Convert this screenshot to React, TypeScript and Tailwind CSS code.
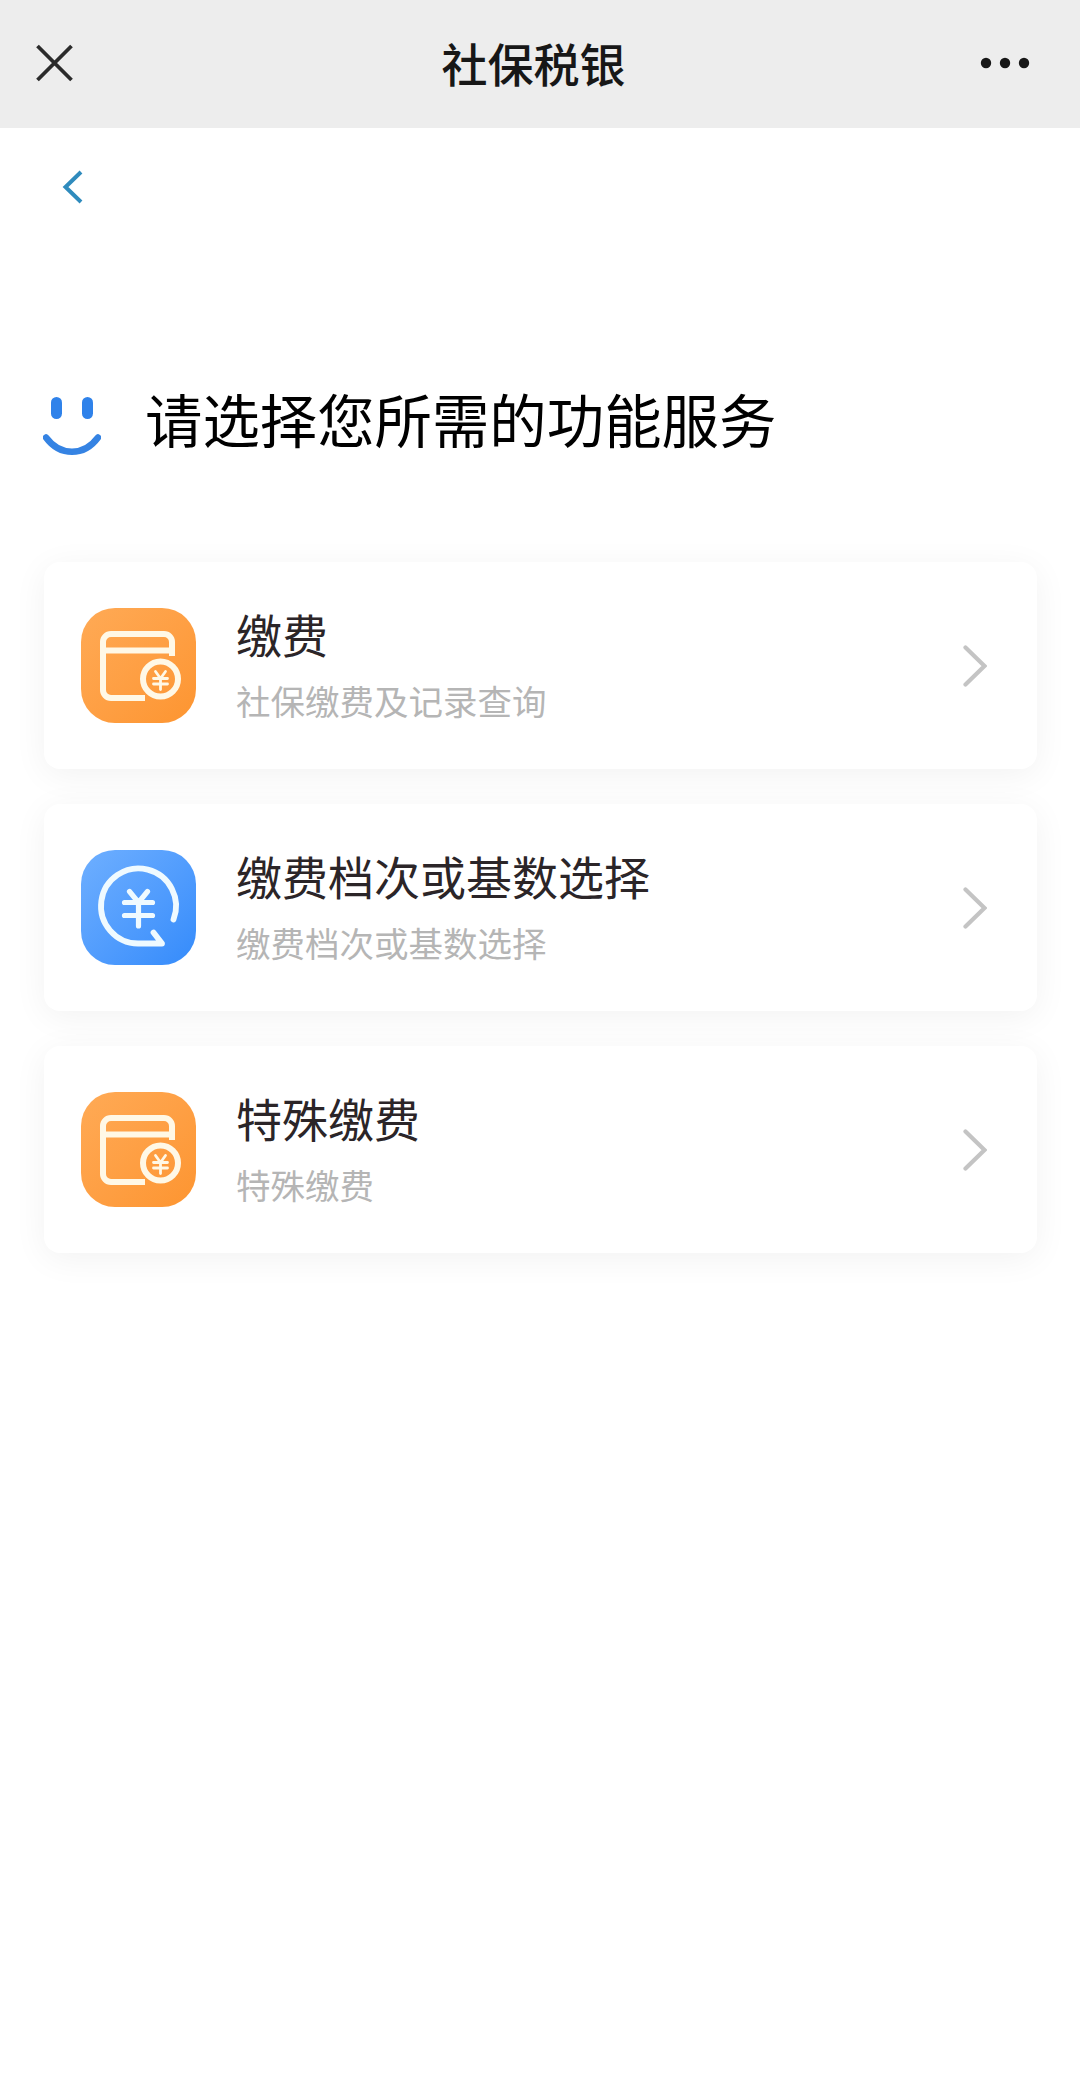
type ServiceKind = "card" | "coin";

interface Service {
  title: string;
  desc: string;
  kind: ServiceKind;
}

const services: Service[] = [
  { title: "缴费", desc: "社保缴费及记录查询", kind: "card" },
  { title: "缴费档次或基数选择", desc: "缴费档次或基数选择", kind: "coin" },
  { title: "特殊缴费", desc: "特殊缴费", kind: "card" },
];

const CardIcon = () => (
  <svg
    viewBox="0 0 115 115"
    className="h-full w-full"
    fill="none"
    stroke="#fff8e6"
    strokeWidth="6"
    strokeLinecap="round"
    strokeLinejoin="round"
  >
    <path
      d="M91 48V34a8 8 0 0 0-8-8H30a8 8 0 0 0-8 8v48a8 8 0 0 0 8 8H64"
      strokeLinecap="butt"
    />
    <path d="M22 42.500h69" strokeLinecap="butt" />
    <circle cx="79.500" cy="71" r="17.500" />
    <path
      d="M74.500 63.500l5 7 5-7M79.500 70.500v11M72.500 70.500h14M72.500 76h14"
      strokeWidth="2.800"
    />
  </svg>
);

const CoinIcon = () => (
  <svg
    viewBox="0 0 115 115"
    className="h-full w-full"
    fill="none"
    stroke="#effaff"
    strokeWidth="5.8"
    strokeLinecap="round"
    strokeLinejoin="round"
  >
    <path d="M92.500 69.500A37.500 37.500 0 1 0 57 93.500h24L72.500 82.500" />
    <path d="M48.500 41.500l9 11 9-11M57.500 53V76M43.500 52.500h28M43.500 65.500h28" strokeWidth="5.2" />
  </svg>
);

const ServiceCard = ({ title, desc, kind }: Service) => (
  <a className="flex h-[207px] items-center rounded-2xl bg-white pr-[50px] pl-[37px] shadow-[0_6px_34px_rgba(0,0,0,0.055)]">
    <div
      className={
        kind === "card"
          ? "size-[115px] shrink-0 rounded-[34px] bg-linear-to-br from-[#ffaa55] to-[#fd9530]"
          : "size-[115px] shrink-0 rounded-[34px] bg-linear-to-br from-[#6eafff] to-[#348bfb]"
      }
    >
      {kind === "card" ? <CardIcon /> : <CoinIcon />}
    </div>
    <div className="ml-10 flex-1 pb-[7px]">
      <h2 className="text-[46px] leading-[66px] text-[#2b2528]">{title}</h2>
      <p className="mt-[9px] text-[34.500px] leading-[50px] text-[#b5b5b5]">{desc}</p>
    </div>
    <svg
      width="24"
      height="42"
      viewBox="0 0 24 42"
      fill="none"
      stroke="#c4c4c4"
      strokeWidth="4.200"
      strokeLinecap="round"
    >
      <path d="M2.500 2.500L21.500 21 2.500 39.500" />
    </svg>
  </a>
);

export default function App() {
  return (
    <div className="min-h-[2091px] w-full bg-white font-['Noto_Sans_CJK_SC',sans-serif]">
      <header className="flex h-32 items-center justify-between bg-[#ededed] pr-[50px] pb-[2px] pl-9">
        <svg width="37" height="38" viewBox="0 0 37 38" fill="none" stroke="#2b2b2b" strokeWidth="3.800">
          <path d="M1.500 2L35.500 36M35.500 2L1.500 36" />
        </svg>
        <h1 className="ml-[14px] pb-[3px] text-[46px] leading-none font-medium text-[#171717]">社保税银</h1>
        <svg width="50" height="12" viewBox="0 0 50 12" fill="#171717">
          <circle cx="6" cy="6" r="5.200" />
          <circle cx="25" cy="6" r="5.200" />
          <circle cx="44" cy="6" r="5.200" />
        </svg>
      </header>

      <main className="pr-[43px] pl-11">
        <div className="flex pt-[42px] pl-[18px]">
          <svg width="21" height="34" viewBox="0 0 21 34" fill="none" stroke="#2f8bbd" strokeWidth="4">
            <path d="M19 2L3.500 17 19 32" />
          </svg>
        </div>

        <div className="mt-[170px] flex h-24 items-center">
          <svg width="58" height="60" viewBox="0 0 58 60" className="mt-2 ml-[-1px]" fill="#2f82ea">
            <rect x="8" y="1" width="11" height="22" rx="5.500" />
            <rect x="39" y="1" width="11" height="22" rx="5.500" />
            <path
              d="M3 41.500C17 60.500 41 60.500 55 41.500"
              fill="none"
              stroke="#3583e3"
              strokeWidth="6.500"
              strokeLinecap="round"
            />
          </svg>
          <p className="ml-11 pb-[8px] text-[57.400px] leading-[84px] text-black">请选择您所需的功能服务</p>
        </div>

        <div className="mt-[92px] flex flex-col gap-[35px]">
          {services.map((item) => (
            <ServiceCard key={item.title} {...item} />
          ))}
        </div>
      </main>
    </div>
  );
}
